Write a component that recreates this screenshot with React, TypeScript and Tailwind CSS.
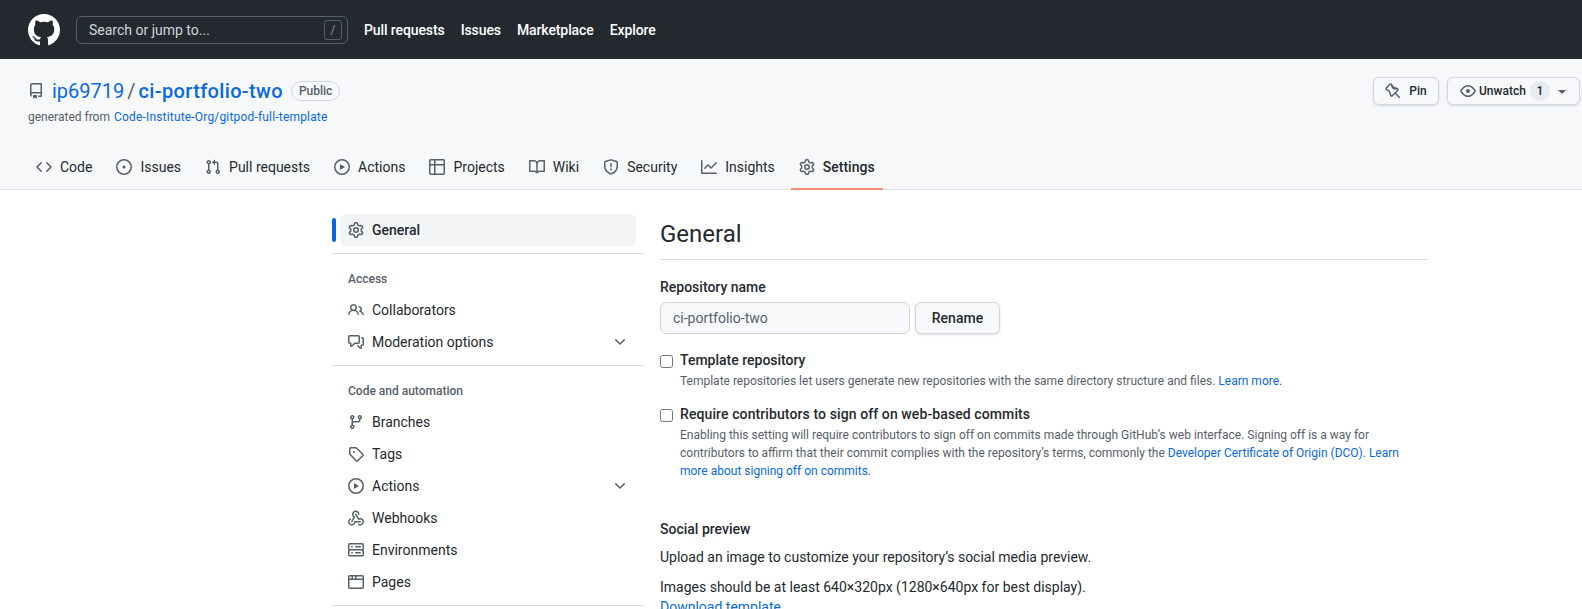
const paths = {
  mark: "M8 0C3.58 0 0 3.58 0 8c0 3.54 2.29 6.53 5.47 7.59.4.07.55-.17.55-.38 0-.19-.01-.82-.01-1.49-2.01.37-2.53-.49-2.69-.94-.09-.23-.48-.94-.82-1.13-.28-.15-.68-.52-.01-.53.63-.01 1.08.58 1.23.82.72 1.21 1.87.87 2.33.66.07-.52.28-.87.51-1.07-1.78-.2-3.64-.89-3.64-3.95 0-.87.31-1.59.82-2.15-.08-.2-.36-1.02.08-2.12 0 0 .67-.21 2.2.82.64-.18 1.32-.27 2-.27.68 0 1.36.09 2 .27 1.53-1.04 2.2-.82 2.2-.82.44 1.1.16 1.92.08 2.12.51.56.82 1.27.82 2.15 0 3.07-1.87 3.75-3.65 3.95.29.25.54.73.54 1.48 0 1.07-.01 1.93-.01 2.2 0 .21.15.46.55.38A8.013 8.013 0 0016 8c0-4.42-3.58-8-8-8z",
  repo: "M2 2.5A2.5 2.5 0 0 1 4.5 0h8.75a.75.75 0 0 1 .75.75v12.5a.75.75 0 0 1-.75.75h-2.5a.75.75 0 0 1 0-1.5h1.75v-2h-8a1 1 0 0 0-.714 1.7.75.75 0 1 1-1.072 1.05A2.495 2.495 0 0 1 2 11.5Zm10.5-1h-8a1 1 0 0 0-1 1v6.708A2.486 2.486 0 0 1 4.5 9h8ZM5 12.25a.25.25 0 0 1 .25-.25h3.5a.25.25 0 0 1 .25.25v3.25a.25.25 0 0 1-.4.2l-1.45-1.087a.249.249 0 0 0-.3 0L5.4 15.7a.25.25 0 0 1-.4-.2Z",
  code: "m11.28 3.22 4.25 4.25a.75.75 0 0 1 0 1.06l-4.25 4.25a.749.749 0 0 1-1.275-.326.749.749 0 0 1 .215-.734L13.94 8l-3.72-3.72a.749.749 0 0 1 .326-1.275.749.749 0 0 1 .734.215Zm-6.56 0a.751.751 0 0 1 1.042.018.751.751 0 0 1 .018 1.042L2.06 8l3.72 3.72a.749.749 0 0 1-.326 1.275.749.749 0 0 1-.734-.215L.47 8.53a.75.75 0 0 1 0-1.06Z",
  issue: "M8 9.5a1.5 1.5 0 1 0 0-3 1.5 1.5 0 0 0 0 3ZM8 0a8 8 0 1 1 0 16A8 8 0 0 1 8 0ZM1.5 8a6.5 6.5 0 1 0 13 0 6.5 6.5 0 0 0-13 0Z",
  pull: "M1.5 3.25a2.25 2.25 0 1 1 3 2.122v5.256a2.251 2.251 0 1 1-1.5 0V5.372A2.25 2.25 0 0 1 1.5 3.25Zm5.677-.177L9.573.677A.25.25 0 0 1 10 .854V2.5h1A2.5 2.5 0 0 1 13.5 5v5.628a2.251 2.251 0 1 1-1.5 0V5a1 1 0 0 0-1-1h-1v1.646a.25.25 0 0 1-.427.177L7.177 3.427a.25.25 0 0 1 0-.354ZM3.75 2.5a.75.75 0 1 0 0 1.5.75.75 0 0 0 0-1.5Zm0 9.5a.75.75 0 1 0 0 1.5.75.75 0 0 0 0-1.5Zm8.25.75a.75.75 0 1 0 1.5 0 .75.75 0 0 0-1.5 0Z",
  play: "M8 0a8 8 0 1 1 0 16A8 8 0 0 1 8 0ZM1.5 8a6.5 6.5 0 1 0 13 0 6.5 6.5 0 0 0-13 0Zm4.879-2.773 4.264 2.559a.25.25 0 0 1 0 .428l-4.264 2.559A.25.25 0 0 1 6 10.559V5.442a.25.25 0 0 1 .379-.215Z",
  table: "M0 1.75C0 .784.784 0 1.75 0h12.5C15.216 0 16 .784 16 1.75v12.5A1.75 1.75 0 0 1 14.25 16H1.75A1.75 1.75 0 0 1 0 14.25ZM6.5 6.5v8h7.75a.25.25 0 0 0 .25-.25V6.5Zm8-1.5V1.75a.25.25 0 0 0-.25-.25H6.5V5Zm-13 1.5v7.75c0 .138.112.25.25.25H5v-8ZM5 5V1.5H1.75a.25.25 0 0 0-.25.25V5Z",
  book: "M0 1.75A.75.75 0 0 1 .75 1h4.253c1.227 0 2.317.59 3 1.501A3.743 3.743 0 0 1 11.006 1h4.245a.75.75 0 0 1 .75.75v10.5a.75.75 0 0 1-.75.75h-4.507a2.25 2.25 0 0 0-1.591.659l-.622.621a.75.75 0 0 1-1.06 0l-.622-.621A2.25 2.25 0 0 0 5.258 13H.75a.75.75 0 0 1-.75-.75Zm7.251 10.324.004-5.073-.002-2.253A2.25 2.25 0 0 0 5.003 2.5H1.5v9h3.757a3.75 3.75 0 0 1 1.994.574ZM8.755 4.75l-.004 7.322a3.752 3.752 0 0 1 1.992-.572H14.5v-9h-3.495a2.25 2.25 0 0 0-2.25 2.25Z",
  shield: "M7.467.133a1.748 1.748 0 0 1 1.066 0l5.25 1.68A1.75 1.75 0 0 1 15 3.48V7c0 1.566-.32 3.182-1.303 4.682-.983 1.498-2.585 2.813-5.032 3.855a1.697 1.697 0 0 1-1.33 0c-2.447-1.042-4.049-2.357-5.032-3.855C1.32 10.182 1 8.566 1 7V3.48a1.75 1.75 0 0 1 1.217-1.667Zm.61 1.429a.25.25 0 0 0-.153 0l-5.25 1.68a.25.25 0 0 0-.174.238V7c0 1.358.275 2.666 1.057 3.86.784 1.194 2.121 2.34 4.366 3.297a.196.196 0 0 0 .154 0c2.245-.956 3.582-2.104 4.366-3.298C13.225 9.666 13.5 8.36 13.5 7V3.48a.251.251 0 0 0-.174-.237l-5.25-1.68ZM8.75 4.75v3a.75.75 0 0 1-1.5 0v-3a.75.75 0 0 1 1.5 0ZM9 10.5a1 1 0 1 1-2 0 1 1 0 0 1 2 0Z",
  graph: "M1.5 1.75V13.5h13.75a.75.75 0 0 1 0 1.5H.75a.75.75 0 0 1-.75-.75V1.75a.75.75 0 0 1 1.5 0Zm14.28 2.53-5.25 5.25a.75.75 0 0 1-1.06 0L7 7.06 4.28 9.78a.751.751 0 0 1-1.042-.018.751.751 0 0 1-.018-1.042l3.25-3.25a.75.75 0 0 1 1.06 0L10 7.94l4.72-4.72a.751.751 0 0 1 1.042.018.751.751 0 0 1 .018 1.042Z",
  gear: "M8 0a8.2 8.2 0 0 1 .701.031C9.444.095 9.99.645 10.16 1.29l.288 1.107c.018.066.079.158.212.224.231.114.454.243.668.386.123.082.233.09.299.071l1.103-.303c.644-.176 1.392.021 1.82.63.27.385.506.792.704 1.218.315.675.111 1.422-.364 1.891l-.814.806c-.049.048-.098.147-.088.294.016.257.016.515 0 .772-.01.147.038.246.088.294l.814.806c.475.469.679 1.216.364 1.891a7.977 7.977 0 0 1-.704 1.217c-.428.61-1.176.807-1.82.63l-1.102-.302c-.067-.019-.177-.011-.3.071a5.909 5.909 0 0 1-.668.386c-.133.066-.194.158-.211.224l-.29 1.106c-.168.646-.715 1.196-1.458 1.26a8.006 8.006 0 0 1-1.402 0c-.743-.064-1.289-.614-1.458-1.26l-.289-1.106c-.018-.066-.079-.158-.212-.224a5.738 5.738 0 0 1-.668-.386c-.123-.082-.233-.09-.299-.071l-1.103.303c-.644.176-1.392-.021-1.82-.63a8.12 8.12 0 0 1-.704-1.218c-.315-.675-.111-1.422.363-1.891l.815-.806c.05-.048.098-.147.088-.294a6.214 6.214 0 0 1 0-.772c.01-.147-.038-.246-.088-.294l-.815-.806C.635 6.045.431 5.298.746 4.623a7.92 7.92 0 0 1 .704-1.217c.428-.61 1.176-.807 1.82-.63l1.102.302c.067.019.177.011.3-.071.214-.143.437-.272.668-.386.133-.066.194-.158.211-.224l.29-1.106C6.009.645 6.556.095 7.299.03 7.53.01 7.764 0 8 0Zm-.571 1.525c-.036.003-.108.036-.137.146l-.289 1.105c-.147.561-.549.967-.998 1.189-.173.086-.34.183-.5.29-.417.278-.97.423-1.529.27l-1.103-.303c-.109-.03-.175.016-.195.045-.22.312-.412.644-.573.99-.014.031-.021.11.059.19l.815.806c.411.406.562.957.53 1.456a4.709 4.709 0 0 0 0 .582c.032.499-.119 1.05-.53 1.456l-.815.806c-.081.08-.073.159-.059.19.162.346.353.677.573.989.02.03.085.076.195.046l1.102-.303c.56-.153 1.113-.008 1.53.27.161.107.328.204.501.29.447.222.85.629.997 1.189l.289 1.105c.029.109.101.143.137.146a6.6 6.6 0 0 0 1.142 0c.036-.003.108-.036.137-.146l.289-1.105c.147-.561.549-.967.998-1.189.173-.086.34-.183.5-.29.417-.278.97-.423 1.529-.27l1.103.303c.109.029.175-.016.195-.045.22-.313.411-.644.573-.99.014-.031.021-.11-.059-.19l-.815-.806c-.411-.406-.562-.957-.53-1.456a4.709 4.709 0 0 0 0-.582c-.032-.499.119-1.05.53-1.456l.815-.806c.081-.08.073-.159.059-.19a6.464 6.464 0 0 0-.573-.989c-.02-.03-.085-.076-.195-.046l-1.102.303c-.56.153-1.113.008-1.53-.27a4.44 4.44 0 0 0-.501-.29c-.447-.222-.85-.629-.997-1.189l-.289-1.105c-.029-.11-.101-.143-.137-.146a6.6 6.6 0 0 0-1.142 0ZM11 8a3 3 0 1 1-6 0 3 3 0 0 1 6 0ZM9.5 8a1.5 1.5 0 1 0-3.001.001A1.5 1.5 0 0 0 9.5 8Z",
  pin: "M4.456.734a1.75 1.75 0 012.826.504l.613 1.327a3.081 3.081 0 002.084 1.707l2.454.584c1.332.317 1.8 1.972.832 2.94L11.06 10l3.72 3.72a.75.75 0 11-1.061 1.06L10 11.06l-2.204 2.205c-.968.968-2.623.5-2.94-.832l-.584-2.454a3.081 3.081 0 00-1.707-2.084l-1.327-.613a1.75 1.75 0 01-.504-2.826L4.456.734zM5.92 1.866a.25.25 0 00-.404-.072L1.794 5.516a.25.25 0 00.072.404l1.328.613A4.582 4.582 0 015.73 9.63l.584 2.454a.25.25 0 00.42.12l5.47-5.47a.25.25 0 00-.12-.42L9.63 6.73a4.581 4.581 0 01-3.098-2.537L5.92 1.866z",
  eye: "M8 2c1.981 0 3.671.992 4.933 2.078 1.27 1.091 2.187 2.345 2.637 3.023a1.62 1.62 0 0 1 0 1.798c-.45.678-1.367 1.932-2.637 3.023C11.67 13.008 9.981 14 8 14c-1.981 0-3.671-.992-4.933-2.078C1.797 10.83.88 9.576.43 8.898a1.62 1.62 0 0 1 0-1.798c.45-.677 1.367-1.931 2.637-3.022C4.33 2.992 6.019 2 8 2ZM1.679 7.932a.12.12 0 0 0 0 .136c.411.622 1.241 1.75 2.366 2.717C5.176 11.758 6.527 12.5 8 12.5c1.473 0 2.825-.742 3.955-1.715 1.124-.967 1.954-2.096 2.366-2.717a.12.12 0 0 0 0-.136c-.412-.621-1.242-1.75-2.366-2.717C10.824 4.242 9.473 3.5 8 3.5c-1.473 0-2.825.742-3.955 1.715-1.124.967-1.954 2.096-2.366 2.717ZM8 10a2 2 0 1 1-.001-3.999A2 2 0 0 1 8 10Z",
  people: "M2 5.5a3.5 3.5 0 1 1 5.898 2.549 5.508 5.508 0 0 1 3.034 4.084.75.75 0 1 1-1.482.235 4 4 0 0 0-7.9 0 .75.75 0 0 1-1.482-.236A5.507 5.507 0 0 1 3.102 8.05 3.493 3.493 0 0 1 2 5.5ZM11 4a3.001 3.001 0 0 1 2.22 5.018 5.01 5.01 0 0 1 2.56 3.012.749.749 0 0 1-.885.954.752.752 0 0 1-.549-.514 3.507 3.507 0 0 0-2.522-2.372.75.75 0 0 1-.574-.73v-.352a.75.75 0 0 1 .416-.672A1.5 1.5 0 0 0 11 5.5.75.75 0 0 1 11 4Zm-5.5-.5a2 2 0 1 0-.001 3.999A2 2 0 0 0 5.5 3.5Z",
  discussion: "M1.75 1h8.5c.966 0 1.75.784 1.75 1.75v5.5A1.75 1.75 0 0 1 10.25 10H7.061l-2.574 2.573A1.458 1.458 0 0 1 2 11.543V10h-.25A1.75 1.75 0 0 1 0 8.25v-5.5C0 1.784.784 1 1.75 1ZM1.5 2.75v5.5c0 .138.112.25.25.25h1a.75.75 0 0 1 .75.75v2.19l2.72-2.72a.749.749 0 0 1 .53-.22h3.5a.25.25 0 0 0 .25-.25v-5.5a.25.25 0 0 0-.25-.25h-8.5a.25.25 0 0 0-.25.25Zm13 2a.25.25 0 0 0-.25-.25h-.5a.75.75 0 0 1 0-1.5h.5c.966 0 1.75.784 1.75 1.75v5.5A1.75 1.75 0 0 1 14.25 12H14v1.543a1.458 1.458 0 0 1-2.487 1.03L9.22 12.28a.749.749 0 0 1 .326-1.275.749.749 0 0 1 .734.215l2.22 2.22v-2.19a.75.75 0 0 1 .75-.75h1a.25.25 0 0 0 .25-.25Z",
  branch: "M9.5 3.25a2.25 2.25 0 1 1 3 2.122V6A2.5 2.5 0 0 1 10 8.5H6a1 1 0 0 0-1 1v1.128a2.251 2.251 0 1 1-1.5 0V5.372a2.25 2.25 0 1 1 1.5 0v1.836A2.493 2.493 0 0 1 6 7h4a1 1 0 0 0 1-1v-.628A2.25 2.25 0 0 1 9.5 3.25Zm-6 0a.75.75 0 1 0 1.5 0 .75.75 0 0 0-1.5 0Zm8.25-.75a.75.75 0 1 0 0 1.5.75.75 0 0 0 0-1.5ZM4.25 12a.75.75 0 1 0 0 1.5.75.75 0 0 0 0-1.5Z",
  tag: "M1 7.775V2.75C1 1.784 1.784 1 2.75 1h5.025c.464 0 .91.184 1.238.513l6.25 6.25a1.75 1.75 0 0 1 0 2.474l-5.026 5.026a1.75 1.75 0 0 1-2.474 0l-6.25-6.25A1.752 1.752 0 0 1 1 7.775Zm1.5 0c0 .066.026.13.073.177l6.25 6.25a.25.25 0 0 0 .354 0l5.025-5.025a.25.25 0 0 0 0-.354l-6.25-6.25a.25.25 0 0 0-.177-.073H2.75a.25.25 0 0 0-.25.25ZM6 5a1 1 0 1 1 0 2 1 1 0 0 1 0-2Z",
  webhook: "M5.5 4.25a2.25 2.25 0 0 1 4.5 0 .75.75 0 0 0 1.5 0 3.75 3.75 0 1 0-6.14 2.889l-2.272 4.258a.75.75 0 0 0 1.324.706L7 7.25a.75.75 0 0 0-.309-1.015A2.25 2.25 0 0 1 5.5 4.25Z M7.364 3.607a.75.75 0 0 1 1.03.257l2.608 4.349a3.75 3.75 0 1 1-.628 6.785.75.75 0 0 1 .752-1.299 2.25 2.25 0 1 0-.033-3.88.75.75 0 0 1-1.03-.256L7.107 4.636a.75.75 0 0 1 .257-1.03Z M2.9 8.776A.75.75 0 0 1 2.625 9.8 2.25 2.25 0 1 0 6 11.75a.75.75 0 0 1 .75-.751h5.5a.75.75 0 0 1 0 1.5H7.425a3.751 3.751 0 1 1-5.55-3.998.75.75 0 0 1 1.024.274Z",
  server: "M1.75 1h12.5c.966 0 1.75.784 1.75 1.75v4c0 .372-.116.717-.314 1 .198.283.314.628.314 1v4a1.75 1.75 0 0 1-1.75 1.75H1.75A1.75 1.75 0 0 1 0 12.75v-4c0-.358.109-.707.314-1a1.739 1.739 0 0 1-.314-1v-4C0 1.784.784 1 1.75 1ZM1.5 2.75v4c0 .138.112.25.25.25h12.5a.25.25 0 0 0 .25-.25v-4a.25.25 0 0 0-.25-.25H1.75a.25.25 0 0 0-.25.25Zm.25 5.75a.25.25 0 0 0-.25.25v4c0 .138.112.25.25.25h12.5a.25.25 0 0 0 .25-.25v-4a.25.25 0 0 0-.25-.25ZM7 4.75A.75.75 0 0 1 7.75 4h4.5a.75.75 0 0 1 0 1.5h-4.5A.75.75 0 0 1 7 4.75ZM7.75 10h4.5a.75.75 0 0 1 0 1.5h-4.5a.75.75 0 0 1 0-1.5ZM3 4.75A.75.75 0 0 1 3.75 4h.5a.75.75 0 0 1 0 1.5h-.5A.75.75 0 0 1 3 4.75ZM3.75 10h.5a.75.75 0 0 1 0 1.5h-.5a.75.75 0 0 1 0-1.5Z",
  browser: "M0 2.75C0 1.784.784 1 1.75 1h12.5c.966 0 1.75.784 1.75 1.75v10.5A1.75 1.75 0 0 1 14.25 15H1.75A1.75 1.75 0 0 1 0 13.25ZM14.5 6h-13v7.25c0 .138.112.25.25.25h12.5a.25.25 0 0 0 .25-.25Zm-6-3.5v2h6V2.75a.25.25 0 0 0-.25-.25ZM5 2.5v2h2v-2Zm-3.25 0a.25.25 0 0 0-.25.25V4.5h2v-2Z",
  chevronDown: "M12.78 5.22a.749.749 0 0 1 0 1.06l-4.25 4.25a.749.749 0 0 1-1.06 0L3.22 6.28a.749.749 0 1 1 1.06-1.06L8 8.939l3.72-3.719a.749.749 0 0 1 1.06 0Z",
  triangleDown: "m4.427 7.427 3.396 3.396a.25.25 0 0 0 .354 0l3.396-3.396A.25.25 0 0 0 11.396 7H4.604a.25.25 0 0 0-.177.427Z",
}

type IconName = keyof typeof paths

function Octicon({ name, size = 16, className }: { name: IconName; size?: number; className?: string }) {
  return (
    <svg width={size} height={size} viewBox="0 0 16 16" fill="currentColor" className={className}>
      <path d={paths[name]} />
    </svg>
  )
}

const globalLinks = ["Pull requests", "Issues", "Marketplace", "Explore"]

const tabs: { label: string; icon: IconName; active?: boolean }[] = [
  { label: "Code", icon: "code" },
  { label: "Issues", icon: "issue" },
  { label: "Pull requests", icon: "pull" },
  { label: "Actions", icon: "play" },
  { label: "Projects", icon: "table" },
  { label: "Wiki", icon: "book" },
  { label: "Security", icon: "shield" },
  { label: "Insights", icon: "graph" },
  { label: "Settings", icon: "gear", active: true },
]

const accessItems: { label: string; icon: IconName; chevron?: boolean }[] = [
  { label: "Collaborators", icon: "people" },
  { label: "Moderation options", icon: "discussion", chevron: true },
]

const automationItems: { label: string; icon: IconName; chevron?: boolean }[] = [
  { label: "Branches", icon: "branch" },
  { label: "Tags", icon: "tag" },
  { label: "Actions", icon: "play", chevron: true },
  { label: "Webhooks", icon: "webhook" },
  { label: "Environments", icon: "server" },
  { label: "Pages", icon: "browser" },
]

function SideItem({ label, icon, chevron }: { label: string; icon: IconName; chevron?: boolean }) {
  return (
    <div className="mx-2 flex h-8 items-center px-2 text-[#24292f]">
      <Octicon name={icon} className="mr-2 text-[#57606a]" />
      <span className="flex-1">{label}</span>
      {chevron && <Octicon name="chevronDown" className="text-[#57606a]" />}
    </div>
  )
}

function SideHeading({ children }: { children: string }) {
  return <div className="h-[28px] pl-4 pt-[5px] text-xs font-medium leading-4 text-[#57606a]">{children}</div>
}

export default function App() {
  return (
    <div className="h-screen overflow-hidden bg-white font-['Roboto',sans-serif] text-sm text-[#24292f]">
      <header className="flex h-[59px] items-center bg-[#24292f] pl-7 text-white">
        <Octicon name="mark" size={32} className="mr-4" />
        <div className="mr-4 flex h-7 w-[272px] items-center justify-between rounded-md border border-[#57606a] pl-3 pr-[5px] text-[#d0d7de]">
          <span>Search or jump to...</span>
          <span className="flex h-5 w-[18px] items-center justify-center rounded-[3px] border border-[#57606a] text-xs text-[#8c959f]">/</span>
        </div>
        <nav className="flex gap-4 font-medium tracking-[-0.1px]">
          {globalLinks.map((link) => (
            <span key={link}>{link}</span>
          ))}
        </nav>
      </header>

      <div className="h-[131px] border-b border-[#d8dee4] bg-[#f6f8fa]">
        <div className="flex justify-between pl-7 pr-[2px] pt-[18px]">
          <div>
            <div className="flex h-7 items-center text-xl">
              <Octicon name="repo" className="mr-2 text-[#57606a]" />
              <span className="text-[#0969da]">ip69719</span>
              <span className="mx-[3px] text-[#57606a]">/</span>
              <span className="font-medium tracking-[0.35px] text-[#0969da]">ci-portfolio-two</span>
              <span className="ml-2 rounded-full border border-[#d0d7de] px-[7px] text-xs font-medium leading-[18px] text-[#57606a]">Public</span>
            </div>
            <div className="mt-[3px] text-xs leading-[18px] text-[#57606a]">
              generated from <span className="ml-px tracking-[0.18px] text-[#0969da]">Code-Institute-Org/gitpod-full-template</span>
            </div>
          </div>
          <div className="flex gap-2 text-xs font-medium">
            <div className="flex h-7 w-[66px] items-center justify-center rounded-md border border-[#d0d7de] bg-[#f6f8fa] shadow-sm">
              <Octicon name="pin" className="mr-2 text-[#57606a]" />
              Pin
            </div>
            <div className="flex h-7 w-[133px] items-center rounded-md border border-[#d0d7de] bg-[#f6f8fa] pl-3 shadow-sm">
              <Octicon name="eye" className="mr-[3px] text-[#57606a]" />
              Unwatch
              <span className="ml-1 flex h-5 w-5 items-center justify-center rounded-full bg-[#afb8c133]">1</span>
              <Octicon name="triangleDown" className="ml-1 text-[#57606a]" />
            </div>
          </div>
        </div>
        <nav className="mt-4 flex h-12 pl-7">
          {tabs.map(({ label, icon, active }) => (
            <div key={label} className={`mr-2 flex h-12 items-center border-b-2 px-2 pt-[3px] ${active ? "border-[#fd8c73] font-medium" : "border-transparent"}`}>
              <Octicon name={icon} className="mr-2 text-[#57606a]" />
              {label}
            </div>
          ))}
        </nav>
      </div>

      <div className="flex pl-[332px] pt-6">
        <aside className="w-[312px]">
          <div className="relative">
            <div className="absolute left-0 top-1 h-6 w-1 rounded-md bg-[#0969da]" />
            <div className="mx-2 flex h-8 items-center rounded-md bg-[#f3f4f6] pl-2 font-medium">
              <Octicon name="gear" className="mr-2 text-[#57606a]" />
              General
            </div>
          </div>
          <div className="mb-3 mt-[7px] h-px bg-[#d8dee4]" />
          <SideHeading>Access</SideHeading>
          {accessItems.map((item) => (
            <SideItem key={item.label} {...item} />
          ))}
          <div className="mb-3 mt-[7px] h-px bg-[#d8dee4]" />
          <SideHeading>Code and automation</SideHeading>
          {automationItems.map((item) => (
            <SideItem key={item.label} {...item} />
          ))}
          <div className="mt-[7px] h-px bg-[#d8dee4]" />
        </aside>

        <main className="ml-4 w-[768px]">
          <h2 className="h-[46px] border-b border-[#d8dee4] text-2xl leading-[40px]">General</h2>
          <label className="mt-[17px] block font-medium leading-5">Repository name</label>
          <div className="mt-[5px] flex gap-[5px]">
            <div className="flex h-8 w-[250px] items-center rounded-md border border-[#d0d7de] bg-[#f6f8fa] pl-3 text-[#57606a]">ci-portfolio-two</div>
            <div className="flex h-8 w-[85px] items-center justify-center rounded-md border border-[#d0d7de] bg-[#f6f8fa] font-medium shadow-sm">Rename</div>
          </div>
          <div className="mt-4 flex">
            <input type="checkbox" className="mr-[7px] mt-[5px] h-[13px] w-[13px]" />
            <div>
              <div className="font-medium leading-5">Template repository</div>
              <p className="mt-[2px] text-xs leading-[18px] text-[#57606a]">
                Template repositories let users generate new repositories with the same directory structure and files. <span className="text-[#0969da]">Learn more.</span>
              </p>
            </div>
          </div>
          <div className="mt-[14px] flex">
            <input type="checkbox" className="mr-[7px] mt-[5px] h-[13px] w-[13px]" />
            <div>
              <div className="font-medium leading-5 tracking-[0.1px]">Require contributors to sign off on web-based commits</div>
              <p className="mt-[2px] w-[730px] text-xs leading-[18px] text-[#57606a]">
                Enabling this setting will require contributors to sign off on commits made through GitHub’s web interface. Signing off is a way for contributors to affirm that their commit complies with the repository’s terms, commonly the <span className="text-[#0969da]">Developer Certificate of Origin (DCO). Learn more about signing off on commits.</span>
              </p>
            </div>
          </div>
          <div className="mt-[39px] font-medium leading-5">Social preview</div>
          <p className="mt-2 leading-5">Upload an image to customize your repository’s social media preview.</p>
          <p className="mt-[10px] leading-5">Images should be at least 640×320px (1280×640px for best display).</p>
          <p className="leading-5 text-[#0969da]">Download template</p>
        </main>
      </div>
    </div>
  )
}
